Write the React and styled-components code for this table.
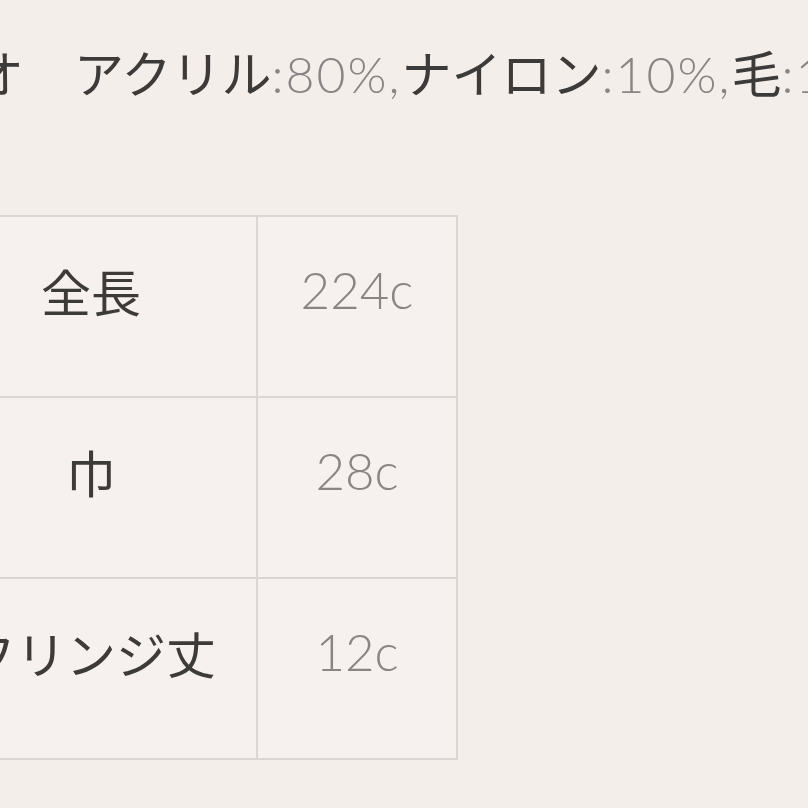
import React from 'react';
import styled, { createGlobalStyle } from 'styled-components';

const GlobalStyle = createGlobalStyle`
  html, body {
    margin: 0;
    padding: 0;
    background: #f4eeeb;
  }
`;

const Page = styled.div`
  width: 808px;
  height: 808px;
  overflow: hidden;
  background: #f4eeeb;
  font-family: 'Noto Sans CJK JP', sans-serif;
  color: #3d3a3a;
`;

const Material = styled.p`
  margin: 0;
  padding-top: 42px;
  margin-left: -26px;
  font-size: 50px;
  line-height: 58px;
  white-space: nowrap;
`;

const Num = styled.span`
  font-family: 'Lato', 'Liberation Sans', sans-serif;
  font-weight: 300;
  color: #8a8585;
  letter-spacing: ${({ wide }) => (wide ? '2px' : '0')};
`;

const Table = styled.div`
  margin-top: 112px;
  margin-left: -76px;
  display: grid;
  grid-template-columns: 332px 200px;
  grid-auto-rows: 181px;
  width: max-content;
  border-top: 2px solid #dcd5d2;
  border-left: 2px solid #dcd5d2;
`;

const Cell = styled.div`
  display: flex;
  align-items: center;
  justify-content: center;
  padding-bottom: 34px;
  box-sizing: border-box;
  background: #f6f1ee;
  border-right: 2px solid #dcd5d2;
  border-bottom: 2px solid #dcd5d2;
  font-size: ${({ value }) => (value ? '51px' : '50px')};
  white-space: nowrap;
`;

const rows = [
  { label: '全長', value: '224c' },
  { label: '巾', value: '28c' },
  { label: 'フリンジ丈', value: '12c' },
];

const App = () => (
  <Page>
    <GlobalStyle />
    <Material>
      オ　アクリル<Num wide>:80%,</Num>ナイロン<Num wide>:10%,</Num>毛<Num wide>:10%</Num>
    </Material>
    <Table>
      {rows.map((row) => (
        <React.Fragment key={row.label}>
          <Cell>{row.label}</Cell>
          <Cell value>
            <Num>{row.value}</Num>
          </Cell>
        </React.Fragment>
      ))}
    </Table>
  </Page>
);

export default App;
